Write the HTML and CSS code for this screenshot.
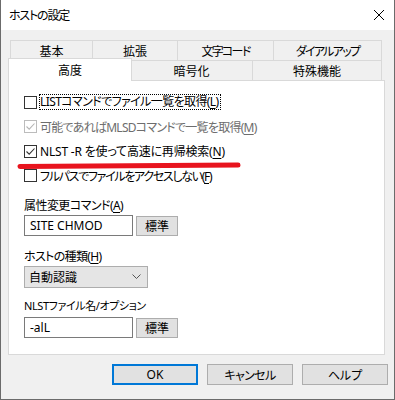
FILE: index.html
```html
<!DOCTYPE html>
<html lang="ja">
<head>
    <meta charset="UTF-8">
    <title>ホストの設定</title>
    <link rel="stylesheet" href="styles.css">
</head>
<body>
    <div class="window">
        <div class="titlebar">
            <span class="title">ホストの設定</span>
            <svg class="close" width="12" height="12" viewBox="0 0 12 12">
                <path d="M1 1 L11 11 M11 1 L1 11" stroke="#000" stroke-width="1" fill="none"/>
            </svg>
        </div>

        <div class="content">
            <div class="tabs">
                <div class="tabrow back">
                    <div class="tab t-kihon">基本</div>
                    <div class="tab t-kakucho">拡張</div>
                    <div class="tab t-moji"><span class="kana-tight">文字コード</span></div>
                    <div class="tab t-dial last"><span class="kana-tight">ダイアルアップ</span></div>
                </div>
                <div class="tabrow front">
                    <div class="tab selected">高度</div>
                    <div class="tab t-angou">暗号化</div>
                    <div class="tab t-tokushu last">特殊機能</div>
                </div>
            </div>

            <div class="panel">
                <div class="check">
                    <span class="box"></span>
                    <span class="focus">LISTコマンドでファイル一覧を取得(<u>L</u>)</span>
                </div>
                <div class="check disabled">
                    <span class="box checked">
                        <svg width="11" height="11" viewBox="0 0 11 11"><path d="M1.5 5.5 L4.2 8.2 L9.5 2.5" stroke="#b5b5b5" stroke-width="1.1" fill="none"/></svg>
                    </span>
                    <span class="mlsd">可能であればMLSDコマンドで一覧を取得(<u>M</u>)</span>
                </div>
                <div class="check">
                    <span class="box checked">
                        <svg width="11" height="11" viewBox="0 0 11 11"><path d="M1.5 5.5 L4.2 8.2 L9.5 2.5" stroke="#333" stroke-width="1.1" fill="none"/></svg>
                    </span>
                    <span class="nlst-r">NLST -R を使って高速に再帰検索(<u>N</u>)</span>
                </div>
                <div class="check">
                    <span class="box"></span>
                    <span class="fullpath">フルパスでファイルをアクセスしない(<u>F</u>)</span>
                </div>

                <!-- hand drawn marker under the NLST option -->
                <svg class="marker" width="224" height="10" viewBox="0 0 224 10">
                    <path d="M3 5.5 L221 4" stroke="#e8141e" stroke-width="5" stroke-linecap="round" fill="none"/>
                </svg>

                <div class="field-label first attr">属性変更コマンド(<u>A</u>)</div>
                <div class="field">
                    <div class="input">SITE CHMOD</div>
                    <div class="btn small">標準</div>
                </div>

                <div class="field-label host">ホストの種類(<u>H</u>)</div>
                <div class="combo">
                    <span>自動認識</span>
                    <svg width="9" height="6" viewBox="0 0 9 6"><path d="M0.5 0.5 L4.5 4.5 L8.5 0.5" stroke="#555" stroke-width="1" fill="none"/></svg>
                </div>

                <div class="field-label nlst">NLSTファイル名/オプション</div>
                <div class="field">
                    <div class="input">-alL</div>
                    <div class="btn small">標準</div>
                </div>
            </div>

            <div class="buttons">
                <div class="btn default">OK</div>
                <div class="btn"><span class="cancel">キャンセル</span></div>
                <div class="btn">ヘルプ</div>
            </div>
        </div>
    </div>
</body>
</html>
```

FILE: styles.css
```css
body {
    margin: 0;
    padding: 0;
    font-family: "Noto Sans", "Noto Sans CJK JP", sans-serif;
    font-size: 12px;
    font-feature-settings: "palt";
    color: #000;
    background: #f0f0f0;
}

.window {
    width: 395px;
    height: 400px;
    box-sizing: border-box;
    border: 1px solid #6b6b6b;
    border-top: none;
    background: #f0f0f0;
    display: flex;
    flex-direction: column;
}

.titlebar {
    height: 30px;
    background: #fff;
    display: flex;
    align-items: center;
    justify-content: space-between;
    padding: 0 9px 0 8px;
}

.title {
    font-size: 12px;
    letter-spacing: -1.2px;
}

.content {
    flex: 1;
    display: flex;
    flex-direction: column;
}

/* Yu Gothic UI kana run narrower than Noto, pull them in */
.kana-tight {
    letter-spacing: -1.7px;
}

/* tabs */
.tabs {
    margin: 10px 0 0 9px;
    width: 372px;
}

.tabrow {
    display: flex;
    height: 20px;
}

.tab {
    box-sizing: border-box;
    height: 20px;
    border-top: 1px solid #d9d9d9;
    border-left: 1px solid #d9d9d9;
    display: flex;
    align-items: center;
    justify-content: center;
    background: #f0f0f0;
    padding-top: 1px;
}

.tab.last {
    border-right: 1px solid #d9d9d9;
}

.t-kihon { width: 82px; }
.t-kakucho { width: 85px; }
.t-moji { width: 96px; }
.t-dial { width: 109px; }

.tabrow.front {
    align-items: flex-end;
}

.tab.selected {
    position: relative;
    z-index: 1;
    width: 124px;
    height: 23px;
    margin: 0 -2px -1px -2px;
    background: #fff;
    border-right: 1px solid #d9d9d9;
    align-items: flex-start;
    padding-top: 2px;
}

.t-angou { width: 122px; }
.t-tokushu { width: 130px; }

/* panel */
.panel {
    position: relative;
    box-sizing: border-box;
    margin-left: 7px;
    width: 377px;
    height: 275px;
    background: #fff;
    border: 1px solid #d9d9d9;
    padding: 9px 0 0 15px;
}

.check {
    height: 24.5px;
    display: flex;
    align-items: center;
}

.box {
    box-sizing: border-box;
    width: 13px;
    height: 13px;
    border: 1px solid #333;
    background: #fff;
    margin-right: 3px;
    display: flex;
    align-items: center;
    justify-content: center;
}

.check.disabled {
    color: #6d6d6d;
}

.check.disabled .box {
    border-color: #bcbcbc;
}

.focus {
    border: 1px dotted #000;
    padding: 0 1px 0 0;
    margin-left: -1px;
    line-height: 14px;
    letter-spacing: -0.6px;
}

.mlsd { letter-spacing: -0.75px; }
.nlst-r { letter-spacing: -0.2px; }
.fullpath { letter-spacing: -1.3px; }

u {
    text-decoration-thickness: 1px;
    text-underline-offset: 2px;
}

.marker {
    position: absolute;
    left: 8px;
    top: 80px;
}

.field-label {
    height: 16px;
    line-height: 16px;
    margin: 1px 0 1px;
}

.field-label.first {
    margin-top: 10px;
}

.field-label.attr { letter-spacing: -0.55px; }
.field-label.host { letter-spacing: -0.65px; }

.field-label.nlst {
    margin-top: 13px;
    margin-bottom: 3px;
    font-size: 11px;
    letter-spacing: -0.4px;
}

.field {
    display: flex;
    align-items: center;
    gap: 3px;
}

.input {
    box-sizing: border-box;
    width: 109px;
    height: 21px;
    border: 1px solid #7a7a7a;
    padding-left: 5px;
    display: flex;
    align-items: center;
}

.combo {
    box-sizing: border-box;
    width: 124px;
    height: 22px;
    border: 1px solid #adadad;
    background: #e5e5e5;
    padding: 0 6px 0 4px;
    display: flex;
    align-items: center;
    justify-content: space-between;
}

.combo + .field-label {
    margin-top: 10px;
}

.field + .field-label {
    margin-top: 13px;
}

.btn {
    box-sizing: border-box;
    width: 86px;
    height: 21px;
    border: 1px solid #adadad;
    background: #e1e1e1;
    display: flex;
    align-items: center;
    justify-content: center;
}

.btn.small {
    width: 42px;
    height: 20px;
}

.btn.default {
    border: 2px solid #0078d7;
}

.cancel { letter-spacing: -0.6px; }

.buttons {
    display: flex;
    justify-content: flex-end;
    gap: 9px;
    padding: 9px 6px 0 0;
}
```
